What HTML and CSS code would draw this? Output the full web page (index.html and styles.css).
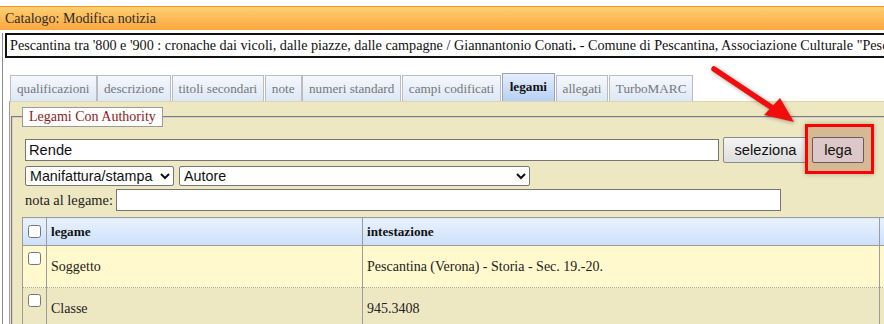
FILE: index.html
```html
<!DOCTYPE html>
<html lang="it">
<head>
  <meta charset="UTF-8" />
  <title>Catalogo: Modifica notizia</title>
  <link rel="stylesheet" href="styles.css">
</head>
<body>

  <div class="titlebar">Catalogo: Modifica notizia</div>

  <div class="frame">
    <!-- ISBD of the record -->
    <div class="isbd">Pescantina tra '800 e '900 : cronache dai vicoli, dalle piazze, dalle campagne / Giannantonio Conati<b>.</b> - Comune di Pescantina, Associazione Culturale "Pescantina Viva", 2005. - 350 p. : ill. ; 30 cm</div>

    <ul class="tabs">
      <li>qualificazioni</li>
      <li>descrizione</li>
      <li>titoli secondari</li>
      <li>note</li>
      <li>numeri standard</li>
      <li>campi codificati</li>
      <li class="active">legami</li>
      <li>allegati</li>
      <li>TurboMARC</li>
    </ul>

    <div class="panel">
      <fieldset class="authority">
        <legend>Legami Con Authority</legend>

        <div class="row row-search">
          <input class="search-input" type="text" value="Rende">
          <button class="btn btn-select">seleziona</button>
          <button class="btn btn-lega">lega</button>
        </div>

        <div class="row row-selects">
          <select class="sel-type"><option>Manifattura/stampa</option></select>
          <select class="sel-role"><option>Autore</option></select>
        </div>

        <div class="row row-nota">
          <label for="nota">nota al legame:</label>
          <input id="nota" class="nota-input" type="text">
        </div>

        <table class="links">
          <colgroup>
            <col class="c-check">
            <col class="c-legame">
            <col class="c-intest">
            <col class="c-more">
          </colgroup>
          <thead>
            <tr>
              <th class="check"><input type="checkbox"></th>
              <th>legame</th>
              <th>intestazione</th>
              <th>note</th>
            </tr>
          </thead>
          <tbody>
            <tr class="odd">
              <td class="check"><input type="checkbox"></td>
              <td>Soggetto</td>
              <td>Pescantina (Verona) - Storia - Sec. 19.-20.</td>
              <td></td>
            </tr>
            <tr class="even">
              <td class="check"><input type="checkbox"></td>
              <td>Classe</td>
              <td>945.3408</td>
              <td></td>
            </tr>
          </tbody>
        </table>
      </fieldset>
    </div>
  </div>

  <!-- annotation: arrow + red box on the "lega" button -->
  <svg class="arrow" viewBox="0 0 110 80" xmlns="http://www.w3.org/2000/svg">
    <line x1="14" y1="14" x2="74" y2="54" stroke="#f20d0d" stroke-width="5.5" stroke-linecap="round"/>
    <polygon points="94,67 64,60 80,43" fill="#f20d0d"/>
  </svg>
  <div class="highlight"></div>

</body>
</html>
```

FILE: styles.css
```css
body {
  margin: 0;
  width: 884px;
  height: 324px;
  overflow: hidden;
  position: relative;
  background: #fff;
  font-family: 'Liberation Serif', 'Times New Roman', serif;
  color: #222;
}

/* Window title */
.titlebar {
  margin-top: 6px;
  height: 23px;
  line-height: 23px;
  padding-left: 5px;
  font-size: 14px;
  color: #2a2a2a;
  border-top: 1px solid #f39a1c;
  background: linear-gradient(#ffcf72, #fca73f);
}

.frame {
  margin-left: 2px;
  border-left: 1px solid #8c8c8c;
  height: 300px;
}

.isbd {
  margin: 3px 0 0 2px;
  width: 1000px;
  height: 21px;
  line-height: 21px;
  padding-left: 3px;
  border: 2px solid #111;
  font-size: 14.2px;
  color: #111;
  white-space: nowrap;
  overflow: hidden;
}

/* Tabs */
.tabs {
  list-style: none;
  margin: 15px 0 0 0;
  padding: 0 0 0 7px;
  display: flex;
  align-items: flex-end;
  gap: 0.5px;
}

.tabs li {
  height: 25px;
  line-height: 25px;
  padding: 0 6px;
  font-size: 13.2px;
  color: #777;
  border: 1px solid #bcbcbc;
  border-bottom: none;
  background: linear-gradient(#f5f8fd, #dce7f7);
}

.tabs li.active {
  height: 27px;
  line-height: 25px;
  padding: 0 7px;
  font-weight: bold;
  color: #111;
  border-color: #9aa3b3;
  background: linear-gradient(#e4edfc, #b7d0f6);
}

/* Panel */
.panel {
  margin-left: 6px;
  border-left: 1px solid #9c9c9c;
  border-top: 1px solid #dcd6ac;
  background: #eee8c2;
  padding: 5px 0 0 1px;
  height: 230px;
}

.authority {
  margin: 0;
  padding: 10px 0 0 9px;
  border: 2px groove #d0d0d0;
  border-right: none;
  border-bottom: none;
  min-width: 0;
}

.authority legend {
  padding: 0 6px;
  margin: 0;
  line-height: 18px;
  font-size: 14px;
  color: #8b1b1b;
  background: #fff;
  border: 1px solid #9a9a9a;
}

.row {
  display: flex;
  align-items: center;
  padding-left: 3px;
}

input[type=text], select, .btn {
  font-family: 'Liberation Sans', Arial, sans-serif;
  font-size: 14.67px;
  color: #111;
  box-sizing: border-box;
  margin: 0;
}

input[type=text] {
  height: 22px;
  border: 1px solid #767676;
  padding: 0 3px;
  background: #fff;
}

.row-search {
  gap: 4px;
  height: 26px;
}

.search-input {
  width: 694px;
}

.btn {
  height: 26px;
  padding: 0;
  border: 1px solid #8a8a8a;
  border-radius: 2px;
  background: linear-gradient(#f4f4f4, #dedede);
}

.btn-select {
  width: 85px;
}

.btn-lega {
  width: 52px;
  position: relative;
  z-index: 3;
  border-color: #6e5a5a;
  background: #dcc8c8;
}

.row-selects {
  margin-top: 3px;
  gap: 5px;
}

select {
  height: 20px;
  border: 1px solid #767676;
  border-radius: 2px;
  background: #fff;
  padding: 0;
  font-size: 14.3px;
}

.sel-type {
  width: 149px;
}

.sel-role {
  width: 351px;
}

.row-nota {
  margin-top: 3px;
  gap: 3px;
}

.row-nota label {
  font-size: 14.4px;
  color: #222;
}

.nota-input {
  width: 665px;
}

/* Links table */
.links {
  margin-top: 6px;
  width: 1000px;
  table-layout: fixed;
  border-collapse: collapse;
  font-size: 14px;
  color: #222;
}

.c-check { width: 24px; }
.c-legame { width: 316px; }
.c-intest { width: 517px; }

.links th,
.links td {
  border-left: 1px solid #9c9c9c;
  border-right: 1px solid #9c9c9c;
  padding: 0 4px;
  text-align: left;
}

.links th {
  height: 27px;
  font-size: 13.2px;
  font-weight: bold;
  color: #111;
  border-top: 1px solid #9c9c9c;
  border-bottom: 1px solid #9c9c9c;
  background: linear-gradient(#e8f2fe, #cde0f9);
}

.links td {
  height: 40px;
  padding-top: 1px;
  vertical-align: middle;
}

.links .check {
  padding: 0;
  text-align: center;
}

.links th.check input {
  margin: 3px 0 0 0;
}

.links td.check {
  vertical-align: top;
}

.links td.check input {
  margin: 6px 0 0 0;
}

.links tr.odd td {
  background: #fff9cd;
  border-bottom: 1px dotted #a8a8a8;
}

.links tr.even td {
  background: #eee8c2;
}

/* Annotation */
.arrow {
  position: absolute;
  left: 700px;
  top: 55px;
  width: 110px;
  height: 80px;
  filter: drop-shadow(1px 1px 2px rgba(0, 0, 0, 0.35));
}

.highlight {
  position: absolute;
  left: 805px;
  top: 124px;
  width: 63px;
  height: 44px;
  border: 3px solid #f00;
  background: #d5b995;
  box-shadow: 0 0 5px rgba(0, 0, 0, 0.3);
  z-index: 2;
}
```
